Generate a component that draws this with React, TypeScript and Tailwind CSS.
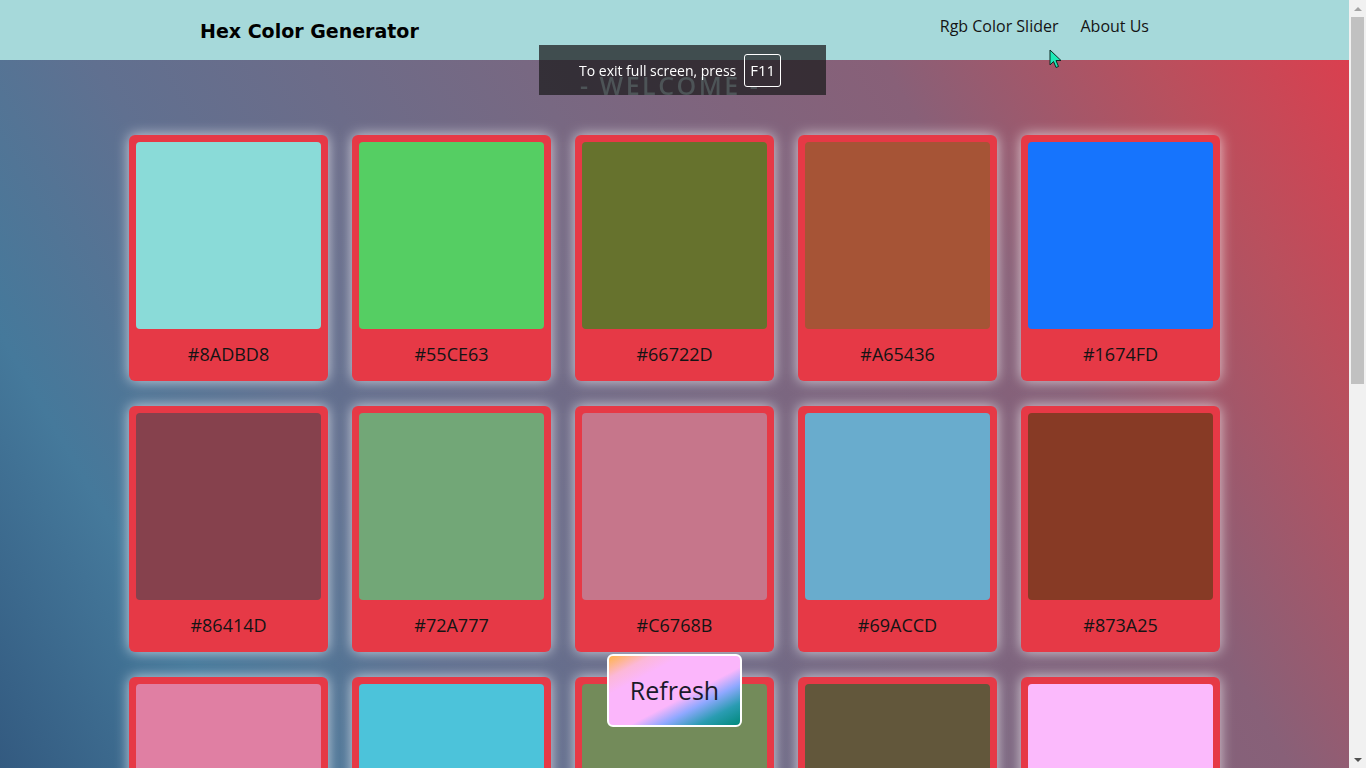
import React from "react";

const colors = [
  "#8ADBD8", "#55CE63", "#66722D", "#A65436", "#1674FD",
  "#86414D", "#72A777", "#C6768B", "#69ACCD", "#873A25",
  "#E07FA3", "#4CC3DA", "#738B5A", "#62573B", "#FBBAFC",
  "#3F8E6A", "#D9A441", "#5B4E9C", "#B8E0A1", "#9C2F5E",
  "#2E6FB0", "#E6C3A5", "#7A3FA0", "#44B5A8", "#C95F2C",
];

function ColorCard({ hex }: { hex: string }) {
  return (
    <div className="flex h-[246px] w-[199px] flex-col rounded-[6px] bg-[#e63946] p-[7px] shadow-[0_0_14px_rgba(255,255,255,0.7)]">
      <div className="h-[187px] w-full rounded-[4px]" style={{ backgroundColor: hex }} />
      <div className="flex flex-1 items-center justify-center pt-[6px] text-[18px] text-[#141414]">
        {hex}
      </div>
    </div>
  );
}

function Scrollbar() {
  return (
    <div className="flex h-full w-[17px] shrink-0 flex-col items-center bg-[#f1f1f1]">
      <div className="flex h-[17px] items-center justify-center">
        <div className="h-0 w-0 border-x-[4px] border-b-[4px] border-x-transparent border-b-[#a3a3a3]" />
      </div>
      <div className="h-[367px] w-[13px] bg-[#c1c1c1]" />
      <div className="flex-1" />
      <div className="flex h-[17px] items-center justify-center">
        <div className="h-0 w-0 border-x-[4px] border-t-[4px] border-x-transparent border-t-[#505050]" />
      </div>
    </div>
  );
}

export default function App() {
  return (
    <div className="flex h-screen w-full overflow-hidden font-['Open_Sans',sans-serif]">
      <div className="relative h-full flex-1 overflow-hidden bg-[linear-gradient(60deg,#335a80_0%,#45799b_14%,#607090_28%,#786882_52%,#886078_72%,#b8505e_87%,#e03c4c_100%)]">
        <header className="flex h-[60px] items-center justify-between bg-[#a6d9da] px-[200px]">
          <h1 className="pt-[3px] font-['DejaVu_Sans',sans-serif] text-[19px] font-bold text-black">
            Hex Color Generator
          </h1>
          <nav className="mb-[9px] flex gap-[22px] text-[16px] font-medium text-[#141414]">
            <a href="#">Rgb Color Slider</a>
            <a href="#">About Us</a>
          </nav>
        </header>

        <main className="flex justify-center pt-[75px] pb-[50px]">
          <div className="grid grid-cols-[repeat(5,199px)] gap-x-[24px] gap-y-[25px]">
            {colors.map((c) => (
              <ColorCard key={c} hex={c} />
            ))}
          </div>
        </main>

        <button className="absolute bottom-[41px] left-[607px] flex h-[73px] w-[135px] items-center justify-center rounded-[6px] border-2 border-white bg-[linear-gradient(to_bottom_right,#ffb347_0%,#fcb8d8_16%,#fbb6fb_28%,#fbb6fb_58%,#8fa8ff_70%,#2a9cb2_84%,#00897b_100%)] text-[25px] font-medium text-[#1a1a2a]">
          Refresh
        </button>
      </div>

      <Scrollbar />

      {/* browser fullscreen bubble, with the heading showing through */}
      <div className="fixed top-[45px] left-[539px] h-[50px] w-[287px] overflow-hidden bg-[rgba(28,28,30,0.74)]">
        <div className="absolute top-[28px] left-[41px] text-[25px] leading-none font-semibold tracking-[2.5px] whitespace-nowrap text-[#4d5457]">
          - WELCOME -
        </div>
        <div className="relative flex h-full items-center gap-[8px] pl-[40px] text-[14px] text-white">
          <span>To exit full screen, press</span>
          <span className="flex h-[33px] items-center rounded-[3px] border border-white px-[5px] text-[15px]">F11</span>
        </div>
      </div>

      <svg className="fixed top-[49px] left-[1049px]" width="14" height="21" viewBox="0 0 14 21">
        <path d="M1 1 L1 16 L4.5 12.5 L7 18.5 L9.5 17.5 L7 11.5 L12 11.5 Z" fill="#1de9b6" stroke="#0a2a22" strokeWidth="1" />
      </svg>
    </div>
  );
}
